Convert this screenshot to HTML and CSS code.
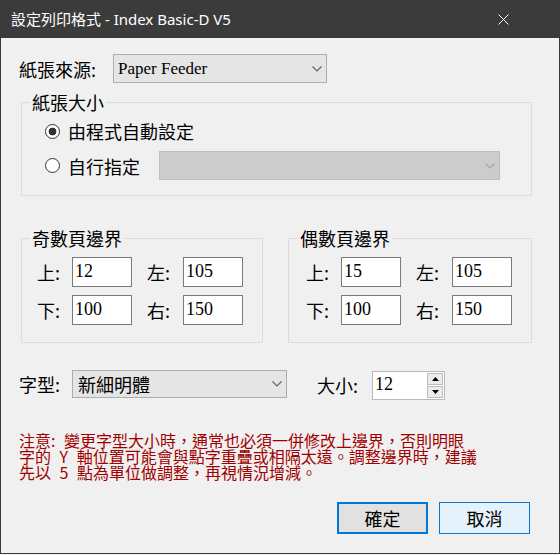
FILE: index.html
```html
<!DOCTYPE html>
<html lang="zh-Hant">
<head>
<meta charset="utf-8">
<title>設定列印格式</title>
<link rel="stylesheet" href="styles.css">
</head>
<body>
<div class="window">
  <div class="titlebar">
    <span class="title">設定列印格式 - Index Basic-D V5</span>
    <span class="close"><svg width="11" height="11" viewBox="0 0 11 11"><path d="M0.5 0.5L10.5 10.5M10.5 0.5L0.5 10.5" stroke="#ffffff" stroke-width="1" fill="none"/></svg></span>
  </div>
  <div class="content">
    <div class="row source-row">
      <span class="lbl source-lbl">紙張來源:</span>
      <div class="combo combo-source">
        <span class="combo-text serif">Paper Feeder</span>
        <svg class="chev" width="10" height="6" viewBox="0 0 10 6"><path d="M0.5 0.5L5 5L9.5 0.5" stroke="#606060" stroke-width="1.1" fill="none"/></svg>
      </div>
    </div>

    <fieldset class="group group-size">
      <legend>紙張大小</legend>
      <div class="size-body">
        <div class="radio-row r1">
          <span class="radio checked"></span>
          <span class="rlabel">由程式自動設定</span>
        </div>
        <div class="radio-row r2">
          <span class="radio"></span>
          <span class="rlabel rlabel-fixed">自行指定</span>
          <div class="combo combo-disabled">
            <svg class="chev" width="10" height="6" viewBox="0 0 10 6"><path d="M0.5 0.5L5 5L9.5 0.5" stroke="#a6a6a6" stroke-width="1.1" fill="none"/></svg>
          </div>
        </div>
      </div>
    </fieldset>

    <div class="margins">
      <fieldset class="group mgroup odd">
        <legend>奇數頁邊界</legend>
        <div class="mgrid">
          <span class="mlbl">上:</span><span class="input serif">12</span>
          <span class="mlbl mlbl2">左:</span><span class="input serif">105</span>
          <span class="mlbl">下:</span><span class="input serif">100</span>
          <span class="mlbl mlbl2">右:</span><span class="input serif">150</span>
        </div>
      </fieldset>
      <fieldset class="group mgroup even">
        <legend>偶數頁邊界</legend>
        <div class="mgrid">
          <span class="mlbl">上:</span><span class="input serif">15</span>
          <span class="mlbl mlbl2">左:</span><span class="input serif">105</span>
          <span class="mlbl">下:</span><span class="input serif">100</span>
          <span class="mlbl mlbl2">右:</span><span class="input serif">150</span>
        </div>
      </fieldset>
    </div>

    <div class="row font-row">
      <span class="lbl font-lbl">字型:</span>
      <div class="combo combo-font">
        <span class="combo-text">新細明體</span>
        <svg class="chev" width="10" height="6" viewBox="0 0 10 6"><path d="M0.5 0.5L5 5L9.5 0.5" stroke="#606060" stroke-width="1.1" fill="none"/></svg>
      </div>
      <span class="lbl size-lbl">大小:</span>
      <div class="spin">
        <span class="spin-text serif">12</span>
        <div class="spin-btns">
          <span class="spin-btn"><svg width="7" height="4" viewBox="0 0 7 4"><path d="M0 4L3.5 0L7 4Z" fill="#000"/></svg></span>
          <span class="spin-btn"><svg width="7" height="4" viewBox="0 0 7 4"><path d="M0 0L3.5 4L7 0Z" fill="#000"/></svg></span>
        </div>
      </div>
    </div>

    <div class="note">
      <div class="note-line">注意: 變更字型大小時，通常也必須一併修改上邊界，否則明眼</div>
      <div class="note-line">字的 Y 軸位置可能會與點字重疊或相隔太遠。調整邊界時，建議</div>
      <div class="note-line">先以 5 點為單位做調整，再視情況增減。</div>
    </div>

    <div class="buttons">
      <span class="btn btn-default">確定</span>
      <span class="btn btn-hover">取消</span>
    </div>
  </div>
</div>
</body>
</html>
```

FILE: styles.css
```css
* { box-sizing: border-box; }
html, body { margin: 0; padding: 0; background: #f0f0f0; }
body {
  font-family: "Noto Sans CJK TC", "Noto Sans", sans-serif;
  color: #000;
}
.serif { font-family: "Liberation Serif", "Noto Sans CJK TC", serif; }

.window {
  width: 560px;
  height: 554px;
  border: 1px solid #3b3b3b;
  border-top: none;
  background: #f0f0f0;
  display: flex;
  flex-direction: column;
}

.titlebar {
  height: 38px;
  flex-shrink: 0;
  background: #3b3b3b;
  color: #ffffff;
  display: flex;
  align-items: center;
  padding: 0 33px 0 10px;
}
.title {
  font-family: "Noto Sans", "Noto Sans CJK TC", sans-serif;
  font-size: 15px;
  line-height: 20px;
}
.close {
  margin-left: auto;
  width: 46px;
  display: flex;
  justify-content: center;
}
.close svg { display: block; }

.content {
  flex: 1;
  display: flex;
  flex-direction: column;
  padding: 16px 18px 0 18px;
}

.row { display: flex; align-items: center; }
.lbl { font-size: 18px; line-height: 22px; white-space: nowrap; }

.source-row { height: 29px; }
.source-lbl { width: 94px; }

.combo {
  height: 29px;
  border: 1px solid #adadad;
  background: #e5e5e5;
  display: flex;
  align-items: center;
  padding: 0 4px 0 4px;
}
.combo-text { white-space: nowrap; }
.combo-source .combo-text { font-size: 17px; line-height: 22px; }
.chev { margin-left: auto; display: block; }
.combo-source { width: 214px; }

.group {
  margin: 0;
  padding: 0;
  border: 1px solid #dcdcdc;
  min-width: 0;
}
.group legend {
  margin-left: 8px;
  padding: 0 2px;
  font-size: 18px;
  line-height: 22px;
}

.group-size {
  margin-top: 8px;
  margin-left: 2px;
  width: 511px;
}
.size-body { padding: 7px 0 15px 23px; }
.radio-row { display: flex; align-items: center; }
.r1 { height: 22px; }
.r2 { height: 29px; margin-top: 9px; }
.radio {
  width: 15px;
  height: 15px;
  border: 1px solid #333333;
  border-radius: 50%;
  background: #ffffff;
  flex-shrink: 0;
}
.radio.checked {
  background: radial-gradient(circle, #333333 0, #333333 3.6px, #ffffff 4.2px);
}
.rlabel {
  margin-left: 8px;
  font-size: 18px;
  line-height: 22px;
  white-space: nowrap;
}
.rlabel-fixed { width: 91px; }
.combo-disabled {
  width: 341px;
  background: #cccccc;
  border-color: #bfbfbf;
}

.margins {
  margin-top: 31px;
  margin-left: 2px;
  display: grid;
  grid-template-columns: 242px 244px;
  column-gap: 25px;
}
.mgroup { padding: 8px 0 17px 0; }
.odd .mgrid { padding-left: 15px; }
.even .mgrid { padding-left: 17px; }
.even legend { margin-left: 9px; }
.mgrid {
  display: grid;
  grid-template-columns: 35px 60px 51px 60px;
  grid-auto-rows: 30px;
  row-gap: 8px;
  align-items: center;
}
.mlbl { font-size: 18px; line-height: 22px; white-space: nowrap; }
.mlbl2 { padding-left: 15px; }
.input {
  height: 30px;
  border: 1px solid #7a7a7a;
  background: #ffffff;
  font-size: 18px;
  line-height: 26px;
  padding-left: 2px;
}

.font-row {
  margin-top: 27px;
  align-items: flex-start;
}
.font-lbl { width: 53px; line-height: 28px; }
.combo-font { width: 215px; height: 28px; }
.combo-font .combo-text { font-size: 18px; line-height: 22px; padding-left: 1px; }
.size-lbl { margin-left: 30px; width: 55px; line-height: 30px; }
.spin {
  margin-top: 1px;
  width: 73px;
  height: 29px;
  border: 1px solid #b9b9b9;
  background: #ffffff;
  display: flex;
  align-items: stretch;
}
.spin-text {
  flex: 1;
  font-size: 18px;
  line-height: 25px;
  padding-left: 2px;
}
.spin-btns {
  width: 17px;
  display: flex;
  flex-direction: column;
  gap: 1px;
  padding: 1px 1px 1px 0;
}
.spin-btn {
  flex: 1;
  background: #ececec;
  border: 1px solid #bdbdbd;
  display: flex;
  align-items: center;
  justify-content: center;
}
.spin-btn svg { display: block; }

.note {
  margin-top: 32px;
  color: #a00000;
  font-size: 16px;
  line-height: 16px;
  word-spacing: 5px;
}
.note-line { white-space: nowrap; height: 16px; }

.buttons {
  margin-top: 22px;
  display: flex;
  justify-content: flex-end;
  gap: 11px;
  margin-right: 11px;
}
.btn {
  width: 91px;
  height: 32px;
  display: flex;
  align-items: center;
  justify-content: center;
  font-size: 18px;
  line-height: 22px;
}
.btn-default {
  background: #e1e1e1;
  border: 2px solid #0078d7;
}
.btn-hover {
  background: #e5f1fb;
  border: 1px solid #0078d7;
}
```
